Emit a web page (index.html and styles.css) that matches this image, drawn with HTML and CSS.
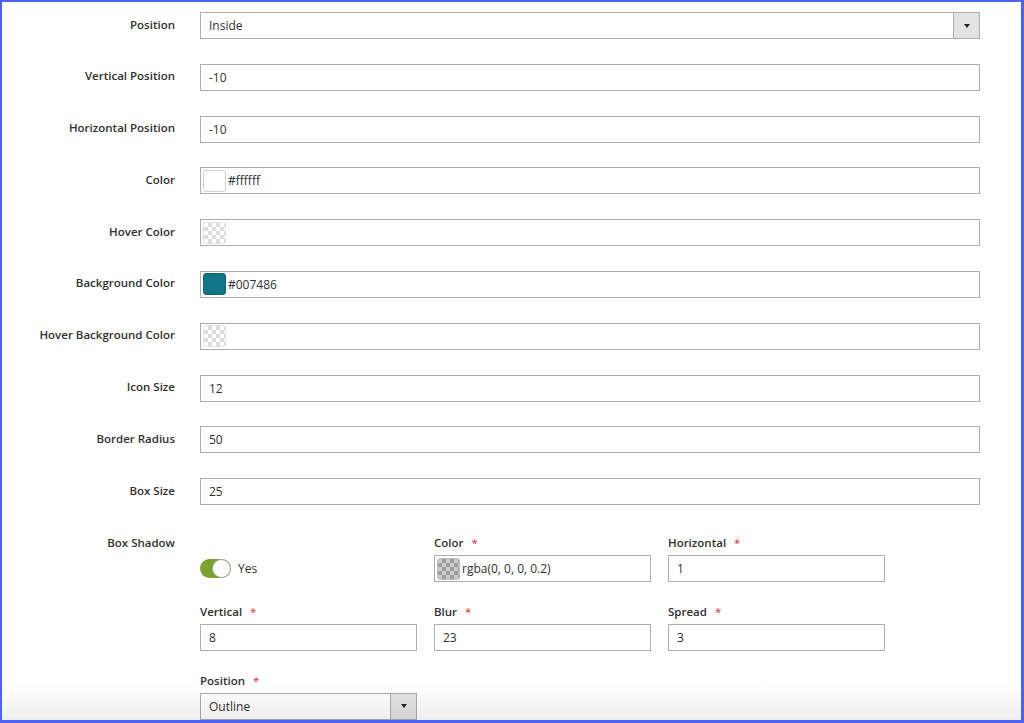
FILE: index.html
```html
<!DOCTYPE html>
<html lang="en">
<head>
<meta charset="utf-8">
<title>Badge settings</title>
<link rel="stylesheet" href="styles.css">
</head>
<body>
<div class="frame">
  <div class="form">
    <div class="row">
      <span class="label">Position</span>
      <div class="field select"><span class="select-value">Inside</span><span class="select-arrow"></span></div>
    </div>
    <div class="row">
      <span class="label">Vertical Position</span>
      <div class="field">-10</div>
    </div>
    <div class="row">
      <span class="label">Horizontal Position</span>
      <div class="field">-10</div>
    </div>
    <div class="row">
      <span class="label">Color</span>
      <div class="field color-field"><span class="swatch swatch-white"></span><span class="color-text">#ffffff</span></div>
    </div>
    <div class="row">
      <span class="label">Hover Color</span>
      <div class="field color-field"><span class="swatch swatch-empty"></span></div>
    </div>
    <div class="row">
      <span class="label">Background Color</span>
      <div class="field color-field"><span class="swatch swatch-teal"></span><span class="color-text">#007486</span></div>
    </div>
    <div class="row">
      <span class="label">Hover Background Color</span>
      <div class="field color-field"><span class="swatch swatch-empty"></span></div>
    </div>
    <div class="row">
      <span class="label">Icon Size</span>
      <div class="field">12</div>
    </div>
    <div class="row">
      <span class="label">Border Radius</span>
      <div class="field">50</div>
    </div>
    <div class="row">
      <span class="label">Box Size</span>
      <div class="field">25</div>
    </div>
    <div class="row row-shadow">
      <span class="label label-top">Box Shadow</span>
      <div class="shadow-grid">
        <div class="cell">
          <div class="sublabel"></div>
          <div class="toggle-wrap"><span class="toggle"><span class="knob"></span></span><span class="toggle-text">Yes</span></div>
        </div>
        <div class="cell">
          <div class="sublabel">Color<span class="req">*</span></div>
          <div class="field color-field"><span class="swatch swatch-shadow"></span><span class="color-text">rgba(0, 0, 0, 0.2)</span></div>
        </div>
        <div class="cell">
          <div class="sublabel">Horizontal<span class="req">*</span></div>
          <div class="field">1</div>
        </div>
        <div class="cell">
          <div class="sublabel">Vertical<span class="req">*</span></div>
          <div class="field">8</div>
        </div>
        <div class="cell">
          <div class="sublabel">Blur<span class="req">*</span></div>
          <div class="field">23</div>
        </div>
        <div class="cell">
          <div class="sublabel">Spread<span class="req">*</span></div>
          <div class="field">3</div>
        </div>
        <div class="cell">
          <div class="sublabel">Position<span class="req">*</span></div>
          <div class="field select"><span class="select-value">Outline</span><span class="select-arrow"></span></div>
        </div>
      </div>
    </div>
  </div>
</div>
</body>
</html>
```

FILE: styles.css
```css
* {
  box-sizing: border-box;
}

html, body {
  margin: 0;
  padding: 0;
  background: #ffffff;
}

body {
  font-family: "Open Sans", "Noto Sans", sans-serif;
  font-size: 12px;
  color: #303030;
}

.frame {
  position: relative;
  width: 1024px;
  height: 723px;
  border-style: solid;
  border-color: #4d63f6;
  border-width: 2px 3px 3px 2px;
  overflow: hidden;
  background: #ffffff;
}

.frame::after {
  content: "";
  position: absolute;
  left: 0;
  right: 0;
  bottom: 0;
  height: 36px;
  background: linear-gradient(to bottom, rgba(0, 0, 0, 0), rgba(0, 0, 0, 0.065));
  pointer-events: none;
}

.form {
  display: flex;
  flex-direction: column;
  gap: 24.8px;
  padding-top: 10px;
}

.row {
  display: grid;
  grid-template-columns: 173px 780px;
  column-gap: 25px;
  align-items: center;
}

.label {
  text-align: right;
  font-weight: 600;
  font-size: 11.5px;
  line-height: 16px;
  padding-bottom: 2px;
  color: #303030;
  white-space: nowrap;
}

.field {
  height: 27px;
  border: 1px solid #adadad;
  background: #ffffff;
  display: flex;
  align-items: center;
  padding: 0 8px;
  font-size: 12px;
  color: #303030;
  white-space: nowrap;
}

.select {
  padding-right: 0;
}

.select-value {
  flex: 1;
}

.select-arrow {
  width: 26px;
  height: 100%;
  background: #e3e3e3;
  border-left: 1px solid #adadad;
  display: flex;
  align-items: center;
  justify-content: center;
}

.select-arrow::before {
  content: "";
  width: 0;
  height: 0;
  border-left: 3.5px solid transparent;
  border-right: 3.5px solid transparent;
  border-top: 4px solid #222222;
}

.color-field {
  padding-left: 1px;
}

.swatch {
  width: 23px;
  height: 22px;
  margin-left: 1px;
  margin-right: 2px;
  border: 1px solid #d0d0d0;
  border-radius: 3px;
  flex: none;
}

.swatch-white {
  background: #ffffff;
}

.swatch-teal {
  background: #117585;
  border-color: #0d6676;
}

.swatch-empty {
  border-color: #e2e2e2;
  background: repeating-conic-gradient(#dcdcdc 0% 25%, #ffffff 0% 50%) 0 0 / 8px 8px;
}

.swatch-shadow {
  border-color: #bdbdbd;
  background:
    linear-gradient(rgba(0, 0, 0, 0.2), rgba(0, 0, 0, 0.2)),
    repeating-conic-gradient(#c4c4c4 0% 25%, #ffffff 0% 50%) 0 0 / 8px 8px;
}

.row-shadow {
  align-items: start;
  margin-top: 5.3px;
}

.label-top {
  padding-bottom: 0;
}

.shadow-grid {
  display: grid;
  grid-template-columns: repeat(3, 217px);
  column-gap: 17px;
  row-gap: 21.7px;
}

.sublabel {
  height: 16px;
  line-height: 16px;
  margin-bottom: 4px;
  font-weight: 600;
  font-size: 11.5px;
  color: #303030;
  white-space: nowrap;
}

.req {
  color: #e22626;
  margin-left: 8px;
  font-weight: 400;
}

.toggle-wrap {
  height: 27px;
  display: flex;
  align-items: center;
  gap: 7px;
}

.toggle {
  position: relative;
  width: 31px;
  height: 19px;
  border-radius: 10px;
  background: #79a22e;
  display: block;
}

.knob {
  position: absolute;
  right: 0;
  top: 0;
  width: 19px;
  height: 19px;
  border-radius: 50%;
  background: #ffffff;
  border: 1px solid #a9a9a9;
}

.toggle-text {
  font-size: 12px;
  color: #303030;
}
```
